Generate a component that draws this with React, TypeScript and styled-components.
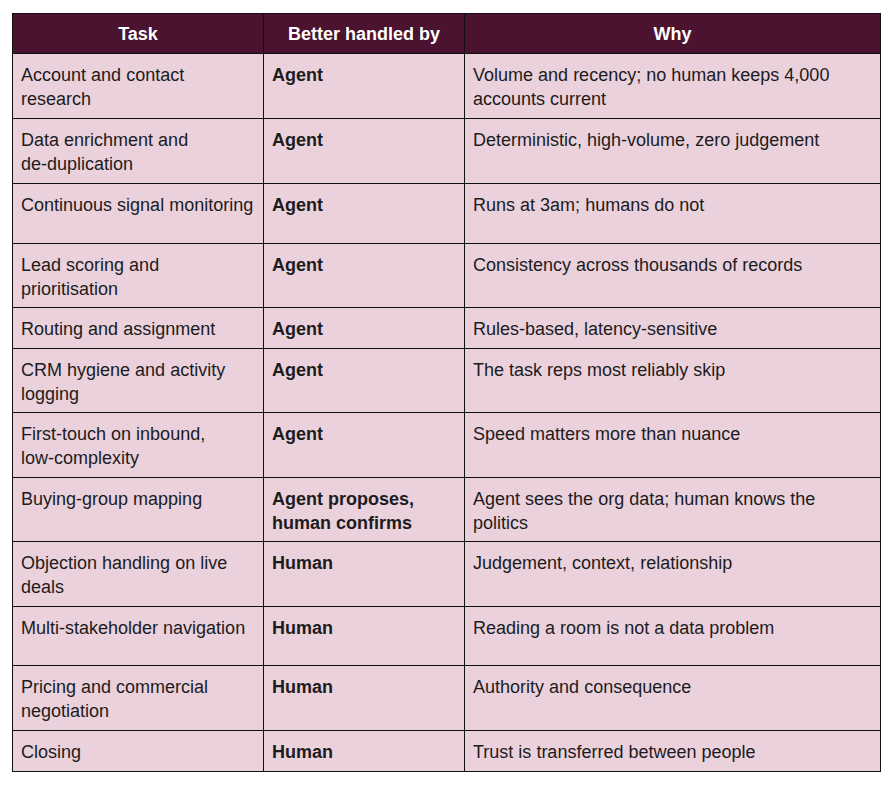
import React from "react";
import styled, { createGlobalStyle } from "styled-components";

const GlobalStyle = createGlobalStyle`
  html, body { margin: 0; padding: 0; background: #ffffff; }
  body { font-family: "Liberation Sans", Arial, sans-serif; }
`;

const Page = styled.div`
  padding: 13px 10px 16px 12px;
`;

const Table = styled.table`
  border-collapse: collapse;
  table-layout: fixed;
  width: 868px;
  font-family: "Liberation Sans", Arial, sans-serif;
  font-size: 18px;
  line-height: 24px;
  color: #1c1c1c;
`;

const HeadCell = styled.th`
  background: #4b1330;
  color: #ffffff;
  font-weight: 700;
  text-align: center;
  padding: 8px 8px 7px;
  border: 1px solid #111111;
  height: 24px;
`;

const Row = styled.tr<{ $h: number }>`
  height: ${(p) => p.$h}px;
`;

const Cell = styled.td<{ $bold?: boolean }>`
  background: #ebd1dc;
  border: 1px solid #111111;
  padding: 9px 8px 6px;
  vertical-align: top;
  font-weight: ${(p) => (p.$bold ? 700 : 400)};
`;

const NoWrap = styled.span`
  white-space: nowrap;
`;

type Item = { task: string; by: string; why: string; h: number };

const rows: Item[] = [
  { task: "Account and contact research", by: "Agent", why: "Volume and recency; no human keeps 4,000 accounts current", h: 65 },
  { task: "Data enrichment and de-duplication", by: "Agent", why: "Deterministic, high-volume, zero judgement", h: 65 },
  { task: "Continuous signal monitoring", by: "Agent", why: "Runs at 3am; humans do not", h: 60 },
  { task: "Lead scoring and prioritisation", by: "Agent", why: "Consistency across thousands of records", h: 64 },
  { task: "Routing and assignment", by: "Agent", why: "Rules-based, latency-sensitive", h: 41 },
  { task: "CRM hygiene and activity logging", by: "Agent", why: "The task reps most reliably skip", h: 64 },
  { task: "First-touch on inbound, low-complexity", by: "Agent", why: "Speed matters more than nuance", h: 65 },
  { task: "Buying-group mapping", by: "Agent proposes, human confirms", why: "Agent sees the org data; human knows the politics", h: 64 },
  { task: "Objection handling on live deals", by: "Human", why: "Judgement, context, relationship", h: 65 },
  { task: "Multi-stakeholder navigation", by: "Human", why: "Reading a room is not a data problem", h: 59 },
  { task: "Pricing and commercial negotiation", by: "Human", why: "Authority and consequence", h: 65 },
  { task: "Closing", by: "Human", why: "Trust is transferred between people", h: 41 },
];

function Words({ text }: { text: string }) {
  const parts = text.split(" ");
  return (
    <>
      {parts.map((w, i) => (
        <React.Fragment key={i}>
          {i > 0 ? " " : null}
          {w.includes("-") ? <NoWrap>{w}</NoWrap> : w}
        </React.Fragment>
      ))}
    </>
  );
}

export default function App() {
  return (
    <Page>
      <GlobalStyle />
      <Table>
        <colgroup>
          <col style={{ width: 251 }} />
          <col style={{ width: 201 }} />
          <col style={{ width: 416 }} />
        </colgroup>
        <thead>
          <Row $h={40}>
            <HeadCell>Task</HeadCell>
            <HeadCell>Better handled by</HeadCell>
            <HeadCell>Why</HeadCell>
          </Row>
        </thead>
        <tbody>
          {rows.map((r) => (
            <Row key={r.task} $h={r.h}>
              <Cell>
                <Words text={r.task} />
              </Cell>
              <Cell $bold>{r.by}</Cell>
              <Cell>
                <Words text={r.why} />
              </Cell>
            </Row>
          ))}
        </tbody>
      </Table>
    </Page>
  );
}
